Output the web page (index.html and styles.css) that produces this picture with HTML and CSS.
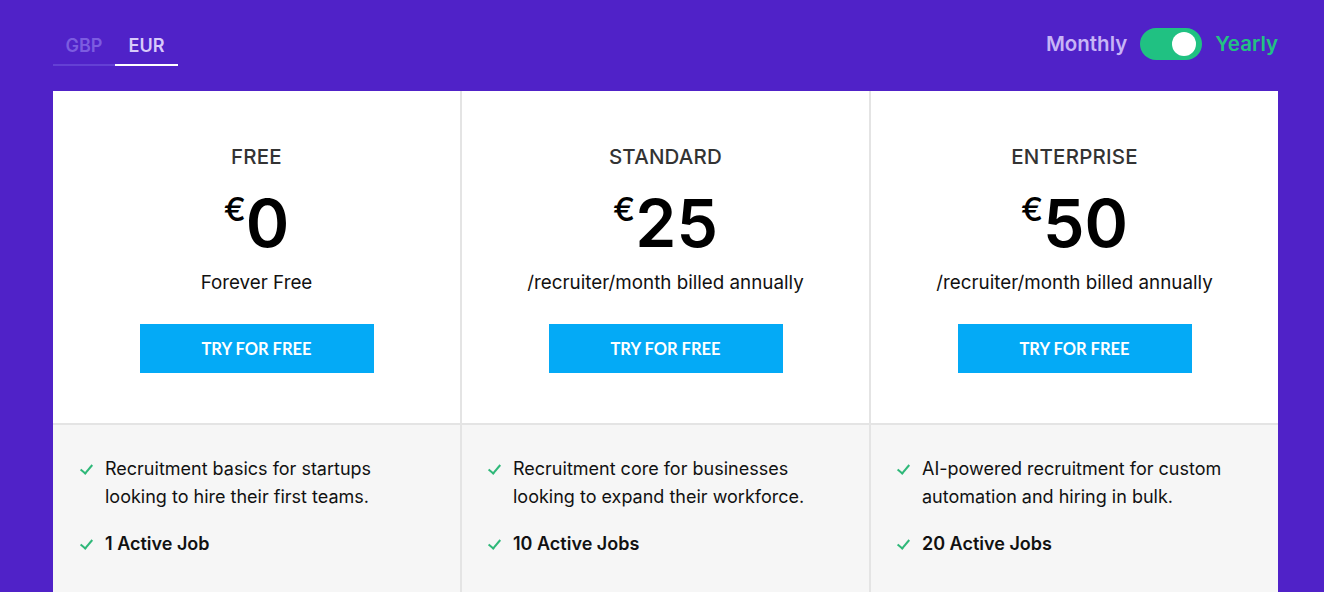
FILE: index.html
```html
<!DOCTYPE html>
<html lang="en">
<head>
<meta charset="utf-8">
<title>Pricing</title>
<link rel="stylesheet" href="styles.css">
</head>
<body>
<div class="page">
  <div class="topbar">
    <div class="tabs">
      <span class="tab">GBP</span>
      <span class="tab active">EUR</span>
    </div>
    <div class="period">
      <span class="monthly">Monthly</span>
      <span class="switch"><span class="knob"></span></span>
      <span class="yearly">Yearly</span>
    </div>
  </div>
  <div class="cards">
    <div class="plan">
      <div class="plan-head">
        <div class="name">FREE</div>
        <div class="price"><span class="cur">€</span><span class="amt">0</span></div>
        <div class="sub">Forever Free</div>
        <a class="btn">TRY FOR FREE</a>
      </div>
      <div class="plan-body">
        <div class="feat"><span class="chk"></span><span>Recruitment basics for startups looking to hire their first teams.</span></div>
        <div class="feat bold"><span class="chk"></span><span>1 Active Job</span></div>
      </div>
    </div>
    <div class="plan">
      <div class="plan-head">
        <div class="name">STANDARD</div>
        <div class="price"><span class="cur">€</span><span class="amt">25</span></div>
        <div class="sub">/recruiter/month billed annually</div>
        <a class="btn">TRY FOR FREE</a>
      </div>
      <div class="plan-body">
        <div class="feat"><span class="chk"></span><span>Recruitment core for businesses looking to expand their workforce.</span></div>
        <div class="feat bold"><span class="chk"></span><span>10 Active Jobs</span></div>
      </div>
    </div>
    <div class="plan">
      <div class="plan-head">
        <div class="name">ENTERPRISE</div>
        <div class="price"><span class="cur">€</span><span class="amt">50</span></div>
        <div class="sub">/recruiter/month billed annually</div>
        <a class="btn">TRY FOR FREE</a>
      </div>
      <div class="plan-body">
        <div class="feat"><span class="chk"></span><span>AI-powered recruitment for custom automation and hiring in bulk.</span></div>
        <div class="feat bold"><span class="chk"></span><span>20 Active Jobs</span></div>
      </div>
    </div>
  </div>
</div>
</body>
</html>
```

FILE: styles.css
```css
* { box-sizing: border-box; }
html, body { margin: 0; padding: 0; }
body {
  background: #5022c8;
  font-family: Inter, "Noto Sans", sans-serif;
  width: 1324px;
  height: 592px;
  overflow: hidden;
}
.page { padding: 0 46px 0 53px; }
.topbar {
  height: 91px;
  display: flex;
  justify-content: space-between;
  align-items: flex-start;
}
.tabs { display: flex; margin-top: 28px; }
.tab {
  display: block;
  width: 62px;
  text-align: center;
  font-size: 18px;
  font-weight: 600;
  line-height: 36px;
  color: #7c5ce0;
  border-bottom: 2px solid #6440d4;
}
.tab.active { width: 63px; color: #d8cafa; border-bottom-color: #ffffff; }
.period {
  display: flex;
  align-items: center;
  margin-top: 28px;
  gap: 13px;
}
.monthly, .yearly { font-size: 20.5px; font-weight: 600; line-height: 32px; }
.monthly { color: #c7b4f6; }
.yearly { color: #22c283; }
.switch {
  width: 62px; height: 32px;
  border-radius: 16px;
  background: #20c182;
  display: flex; align-items: center; justify-content: flex-end;
  padding-right: 6px;
}
.knob { width: 24px; height: 24px; border-radius: 50%; background: #fff; }
.cards {
  display: grid;
  grid-template-columns: 407px 409px 409px;
}
.plan + .plan { border-left: 2px solid #e4e4e4; }
.plan-head {
  background: #fff;
  height: 334px;
  border-bottom: 2px solid #e4e4e4;
  display: flex;
  flex-direction: column;
  align-items: center;
  padding-top: 54px;
}
.name { font-size: 20.5px; line-height: 24px; color: #333; font-weight: 500; letter-spacing: 0.2px; }
.price { display: flex; align-items: flex-start; margin-top: 14px; color: #000; }
.cur { font-size: 33px; line-height: 40px; margin-top: 6px; font-weight: 500; }
.amt { font-size: 66px; line-height: 80px; font-weight: 600; }
.sub { font-size: 18.8px; line-height: 24px; color: #111; margin-top: 8px; }
.btn {
  margin-top: 29px;
  width: 234px; height: 49px;
  background: #04aaf6;
  color: #fff;
  font-family: Lato, sans-serif;
  font-weight: 700;
  font-size: 16.5px;
  display: flex; align-items: center; justify-content: center;
}
.plan-body {
  background: #f6f6f6;
  height: 170px;
  padding: 30px 30px 0 27px;
}
.plan + .plan .plan-body { padding-left: 26px; }
.feat {
  display: flex;
  gap: 11px;
  font-size: 18px;
  line-height: 28px;
  color: #111;
}
.feat + .feat { margin-top: 19px; }
.feat.bold { font-weight: 600; }
.chk {
  flex: none;
  width: 14px; height: 28px;
  position: relative;
}
.chk::after {
  content: "";
  position: absolute;
  left: 3px; top: 7px;
  width: 5px; height: 10px;
  border-right: 2px solid #2fb879;
  border-bottom: 2px solid #2fb879;
  transform: rotate(40deg);
}
```
